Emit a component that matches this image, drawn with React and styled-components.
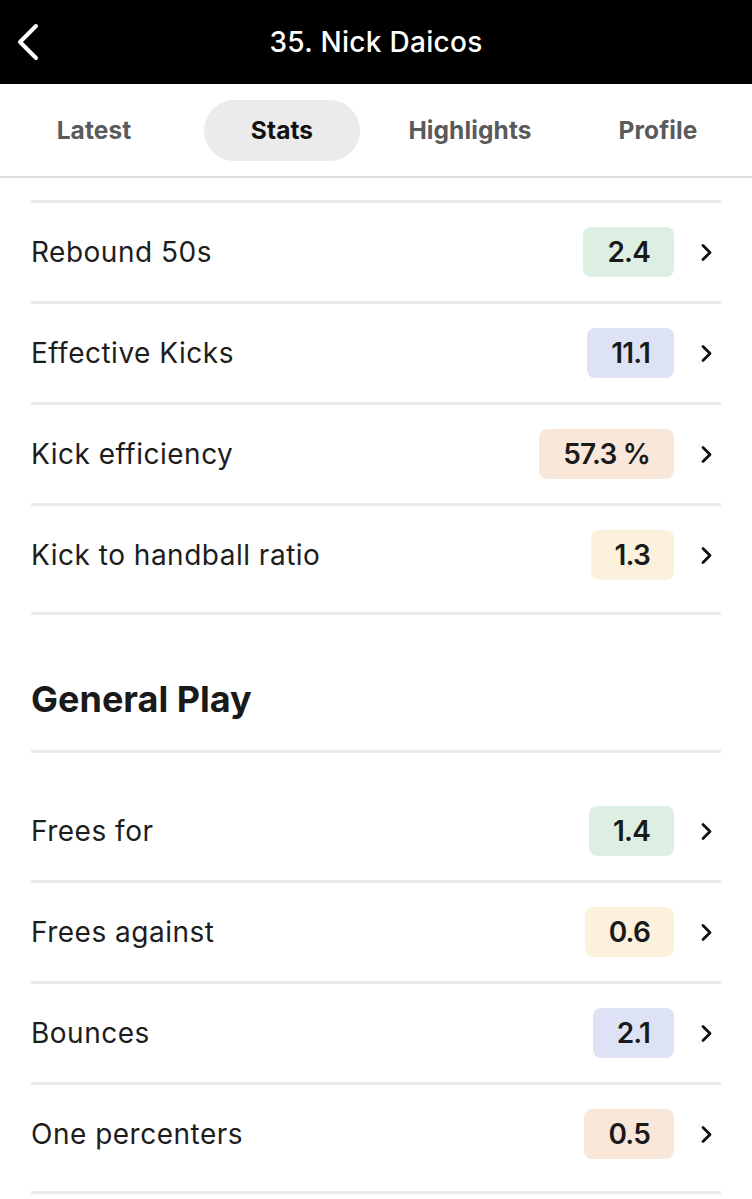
import React from "react";
import styled, { createGlobalStyle } from "styled-components";

const Global = createGlobalStyle`
  html, body { margin: 0; padding: 0; background: #fff; }
  body { font-family: Inter, "Noto Sans", "Liberation Sans", sans-serif; -webkit-font-smoothing: antialiased; }
  * { box-sizing: border-box; }
`;

const Page = styled.div`
  width: 752px;
  min-height: 1199px;
  background: #fff;
  overflow: hidden;
`;

const Header = styled.header`
  height: 84px;
  background: #000;
  display: grid;
  grid-template-columns: 60px 1fr 60px;
  align-items: center;
`;

const BackButton = styled.button`
  background: none;
  border: 0;
  padding: 0 0 0 16px;
  height: 84px;
  display: flex;
  align-items: center;
  color: #fff;
  cursor: pointer;
`;

const Title = styled.h1`
  margin: 0;
  text-align: center;
  color: #fff;
  font-size: 28px;
  font-weight: 500;
  letter-spacing: 0.3px;
`;

const TabBar = styled.nav`
  height: 94px;
  display: grid;
  grid-template-columns: repeat(4, 1fr);
  align-items: center;
  justify-items: center;
  border-bottom: 2px solid #dedede;
`;

const Tab = styled.div`
  width: 156px;
  height: 61px;
  border-radius: 31px;
  display: flex;
  align-items: center;
  justify-content: center;
  font-size: 24.5px;
  font-weight: 700;
  letter-spacing: 0.1px;
  color: ${(p) => (p.$active ? "#111" : "#5a5a5a")};
  background: ${(p) => (p.$active ? "#ebebeb" : "transparent")};
`;

const Content = styled.main`
  padding: 22px 31px 0;
`;

const List = styled.div`
  padding-top: ${(p) => p.$top || 0}px;
  padding-bottom: 8px;
  border-bottom: 3px solid #ebebeb;
`;

const Row = styled.div`
  height: ${(p) => (p.$first ? 98 : 101)}px;
  border-top: ${(p) => (p.$first ? "none" : "3px solid #ebebeb")};
  display: flex;
  align-items: center;
`;

const Label = styled.span`
  flex: 1;
  font-size: 28px;
  letter-spacing: 0.5px;
  color: #1d1d1d;
  font-weight: 400;
`;

const Badge = styled.span`
  height: 50px;
  padding: 0 24px;
  border-radius: 8px;
  display: flex;
  align-items: center;
  justify-content: center;
  font-size: 28px;
  font-weight: 600;
  letter-spacing: -0.8px;
  color: #1a1a1a;
  background: ${(p) => p.$bg};
`;

const Chevron = styled.span`
  width: 47px;
  display: flex;
  justify-content: flex-end;
  padding-right: 8px;
`;

const Heading = styled.h2`
  margin: 0;
  height: 138px;
  padding-top: 64px;
  font-size: 36px;
  font-weight: 700;
  color: #1a1a1a;
  line-height: 40px;
  border-bottom: 3px solid #ebebeb;
`;

const COLORS = {
  green: "#ddefe3",
  blue: "#dde3f5",
  peach: "#f9e8da",
  yellow: "#fcf1dc",
};

const section1 = [
  ["Rebound 50s", "2.4", "green"],
  ["Effective Kicks", "11.1", "blue"],
  ["Kick efficiency", "57.3 %", "peach"],
  ["Kick to handball ratio", "1.3", "yellow"],
];

const section2 = [
  ["Frees for", "1.4", "green"],
  ["Frees against", "0.6", "yellow"],
  ["Bounces", "2.1", "blue"],
  ["One percenters", "0.5", "peach"],
];

const ChevronIcon = () => (
  <svg width="13" height="19" viewBox="0 0 13 19" fill="none">
    <path d="M3 2.5 L10 9.5 L3 16.5" stroke="#111" strokeWidth="2.8" strokeLinecap="round" strokeLinejoin="round" />
  </svg>
);

const BackIcon = () => (
  <svg width="24" height="38" viewBox="0 0 24 38" fill="none">
    <path d="M20 3 L4 19 L20 35" stroke="#fff" strokeWidth="4" strokeLinecap="round" strokeLinejoin="round" />
  </svg>
);

const StatRow = ({ label, value, color, first }) => (
  <Row $first={first}>
    <Label>{label}</Label>
    <Badge $bg={COLORS[color]}>{value}</Badge>
    <Chevron>
      <ChevronIcon />
    </Chevron>
  </Row>
);

export default function App() {
  return (
    <Page>
      <Global />
      <Header>
        <BackButton aria-label="Back">
          <BackIcon />
        </BackButton>
        <Title>35. Nick Daicos</Title>
        <span />
      </Header>
      <TabBar>
        <Tab>Latest</Tab>
        <Tab $active>Stats</Tab>
        <Tab>Highlights</Tab>
        <Tab>Profile</Tab>
      </TabBar>
      <Content>
        <List>
          {section1.map(([l, v, c]) => (
            <StatRow key={l} label={l} value={v} color={c} />
          ))}
        </List>
        <Heading>General Play</Heading>
        <List $top={29}>
          {section2.map(([l, v, c], i) => (
            <StatRow key={l} label={l} value={v} color={c} first={i === 0} />
          ))}
        </List>
      </Content>
    </Page>
  );
}
